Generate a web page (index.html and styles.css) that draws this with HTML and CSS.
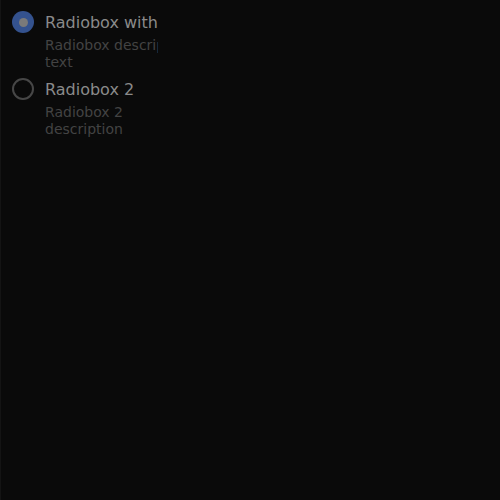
FILE: index.html
```html
<!DOCTYPE html>
<html>
<head>
<meta charset="utf-8">
<link rel="stylesheet" href="styles.css">
</head>
<body>
<div class="group">
  <div class="item">
    <span class="radio checked"><span class="dot"></span></span>
    <div class="text">
      <div class="label">Radiobox with</div>
      <div class="desc">Radiobox description text</div>
    </div>
  </div>
  <div class="item">
    <span class="radio"></span>
    <div class="text">
      <div class="label">Radiobox 2</div>
      <div class="desc">Radiobox 2 description</div>
    </div>
  </div>
</div>
</body>
</html>
```
FILE: styles.css
```css
html, body {
  margin: 0;
  padding: 0;
  background: #0a0a0a;
  height: 100%;
}
body {
  font-family: "DejaVu Sans", sans-serif;
  border-left: 1px solid #141414;
  box-sizing: border-box;
}
.group {
  width: 157px;
  overflow: hidden;
  padding: 11px 0 0 11px;
  box-sizing: border-box;
  display: flex;
  flex-direction: column;
  gap: 7px;
}
.item {
  display: flex;
  gap: 11px;
  align-items: flex-start;
}
.radio {
  flex: none;
  width: 22px;
  height: 22px;
  box-sizing: border-box;
  border-radius: 50%;
  border: 2px solid #474747;
  display: flex;
  align-items: center;
  justify-content: center;
}
.radio.checked {
  border: none;
  background: #34528e;
}
.dot {
  width: 9px;
  height: 9px;
  border-radius: 50%;
  background: #7a7a7a;
}
.text {
  flex: none;
  width: 155px;
  padding-top: 1px;
}
.label {
  font-size: 16px;
  line-height: 22px;
  color: #8a8a8a;
  white-space: nowrap;
}
.desc {
  font-size: 14px;
  line-height: 17px;
  color: #434343;
  margin-top: 3px;
}
```
